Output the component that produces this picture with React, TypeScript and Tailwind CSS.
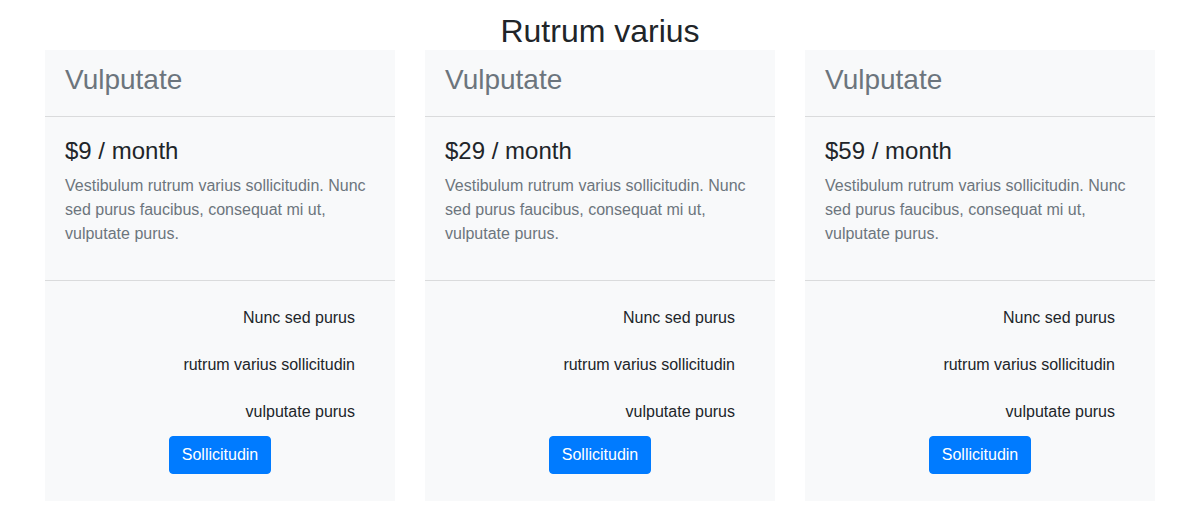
const plans = [
  { price: '$9' },
  { price: '$29' },
  { price: '$59' },
];

const features = ['Nunc sed purus', 'rutrum varius sollicitudin', 'vulputate purus'];

const PlanCard = ({ price }: { price: string }) => (
  <div className="bg-[#f8f9fa] flex flex-col">
    <div className="px-5 pt-[13px] pb-[11px] border-b border-[#dadbdc]">
      <h3 className="text-[28px] leading-[33.6px] mb-2 text-[#6c757d]">Vulputate</h3>
    </div>
    <div className="px-5 pt-5 pb-5 border-b border-[#dadbdc]">
      <h4 className="text-[24px] leading-[28.8px] mb-2 text-[#212529]">{price} / month</h4>
      <p className="text-base leading-6 mb-[14px] text-[#6c757d]">
        Vestibulum rutrum varius sollicitudin. Nunc sed purus faucibus, consequat mi ut, vulputate purus.
      </p>
    </div>
    <div className="px-5 pt-[14px] pb-[27px]">
      <ul className="text-right pr-5 text-[#212529]">
        {features.map((f) => (
          <li key={f} className="text-base leading-6 py-[11.5px]">{f}</li>
        ))}
      </ul>
      <div className="flex justify-center">
        <button className="bg-[#007bff] text-white text-base leading-6 px-3 py-[6px] border border-[#007bff] rounded">
          Sollicitudin
        </button>
      </div>
    </div>
  </div>
);

export default function App() {
  return (
    <div className="min-h-screen bg-white pt-[12px]" style={{ fontFamily: '"Liberation Sans", Arial, sans-serif' }}>
      <h2 className="text-center text-[32px] leading-[38.4px] text-[#212529]">Rutrum varius</h2>
      <div className="max-w-[1140px] mx-auto px-[15px] grid grid-cols-3 gap-[30px]">
        {plans.map((p) => (
          <PlanCard key={p.price} price={p.price} />
        ))}
      </div>
    </div>
  );
}
